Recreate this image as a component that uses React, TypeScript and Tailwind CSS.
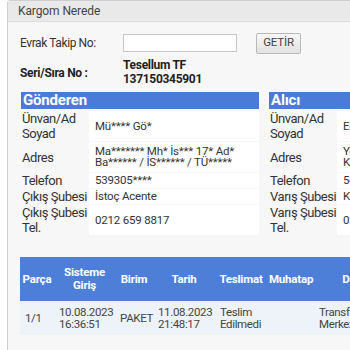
import React from 'react';

const SENDER = [
  { label: 'Ünvan/Ad Soyad', value: 'Mü**** Gö*' },
  { label: 'Adres', value: 'Ma******* Mh* İs*** 17* Ad* Ba****** / İS****** / TÜ*****', tall: true },
  { label: 'Telefon', value: '539305****' },
  { label: 'Çıkış Şubesi', value: 'İstoç Acente' },
  { label: 'Çıkış Şubesi Tel.', value: '0212 659 8817' },
];

const RECEIVER = [
  { label: 'Ünvan/Ad Soyad', value: 'Ec*** Ka****' },
  { label: 'Adres', value: 'Ye**** Mh* At*** 5* Sa**** / KA**** / SA****', tall: true },
  { label: 'Telefon', value: '543210****' },
  { label: 'Varış Şubesi', value: 'Karasu Acente' },
  { label: 'Varış Şubesi Tel.', value: '0264 718 2233' },
];

const COLUMNS = [
  { title: 'Parça', w: 'w-[34px]' },
  { title: 'Sisteme Giriş', w: 'w-[61px]' },
  { title: 'Birim', w: 'w-[38px]' },
  { title: 'Tarih', w: 'w-[62px]' },
  { title: 'Teslimat', w: 'w-[52px]' },
  { title: 'Muhatap', w: 'w-[47px]' },
  { title: 'Durum', w: 'w-[90px]' },
  { title: 'Açıklama', w: 'w-[90px]' },
];

const ROW = ['1/1', '10.08.2023 16:36:51', 'PAKET', '11.08.2023 21:48:17', 'Teslim Edilmedi', '', 'Transfer Merkezinde', ''];

type Item = { label: string; value: string; tall?: boolean };

const PartySection: React.FC<{ title: string; items: Item[] }> = ({ title, items }) => (
  <div className="w-[238px] shrink-0">
    <div className="h-[17px] bg-[#4a7bd9] px-[2px] text-[15px] font-bold leading-[17px] tracking-[-0.2px] text-white">
      {title}
    </div>
    <div className="mt-[2px] flex flex-col gap-[1px]">
      {items.map((item) => (
        <div key={item.label} className="flex">
          <div className="flex w-[68px] shrink-0 items-center pl-[1px] text-[13px] leading-[15px] tracking-[-0.45px] text-[#333]">
            {item.label}
          </div>
          <div
            className={`flex flex-1 items-center bg-white px-[6px] text-[11.5px] leading-[11px] tracking-[-0.2px] text-[#333] ${
              item.tall ? 'py-[4px]' : 'py-[2px]'
            }`}
          >
            {item.value}
          </div>
        </div>
      ))}
    </div>
  </div>
);

export default function App() {
  return (
    <div
      className="h-[350px] w-[350px] overflow-hidden bg-white"
      style={{ fontFamily: 'Roboto, "Noto Sans", sans-serif' }}
    >
      <div className="ml-[7px] h-[360px] w-[560px] rounded-tl-[4px] border-l border-t border-[#cfcfcf] bg-[#f7f7f7]">
        {/* Header */}
        <div className="h-[21px] border-b border-[#dcdcdc] bg-[#e9e9e9] pl-[10px] text-[12px] leading-[21px] tracking-[-0.1px] text-[#444]">
          Kargom Nerede
        </div>

        <div className="pl-[12px] pt-[10px]">
          {/* Search */}
          <div className="flex h-[22px] items-center">
            <div className="w-[103px] text-[12px] tracking-[-0.4px] text-[#333]">Evrak Takip No:</div>
            <div className="h-[18px] w-[114px] border border-[#c8c8c8] bg-white" />
            <button className="ml-[19px] h-[21px] w-[45px] rounded-[2px] border border-[#b9b9b9] bg-gradient-to-b from-[#f7f7f7] to-[#e2e2e2] text-[11.5px] tracking-[-0.2px] text-[#444]">
              GETİR
            </button>
          </div>

          <div className="mt-[4px] flex items-center">
            <div className="w-[103px] pt-[2px] text-[12px] font-bold tracking-[-0.3px] text-[#222]">Seri/Sıra No :</div>
            <div className="text-[12px] font-bold leading-[14px] tracking-[-0.3px] text-[#222]">
              <div>Tesellum TF</div>
              <div>137150345901</div>
            </div>
          </div>

          {/* Parties */}
          <div className="mt-[6px] flex gap-[10px] pl-[1px]">
            <PartySection title="Gönderen" items={SENDER} />
            <PartySection title="Alıcı" items={RECEIVER} />
          </div>

          {/* Movements */}
          <table className="mt-[22px] w-[474px] table-fixed border-collapse">
            <thead>
              <tr className="h-[44px] bg-[#4d7fd8]">
                {COLUMNS.map((c) => (
                  <th key={c.title} className={`${c.w} px-[2px] text-center text-[11.5px] font-bold leading-[13px] tracking-[-0.2px] text-white`}>
                    {c.title}
                  </th>
                ))}
              </tr>
            </thead>
            <tbody>
              <tr className="h-[34px] bg-[#eef2f9]">
                {ROW.map((v, i) => (
                  <td key={i} className="px-[5px] text-left text-[11.5px] leading-[12px] tracking-[-0.35px] text-[#444]">
                    {v}
                  </td>
                ))}
              </tr>
            </tbody>
          </table>
        </div>
      </div>
    </div>
  );
}
